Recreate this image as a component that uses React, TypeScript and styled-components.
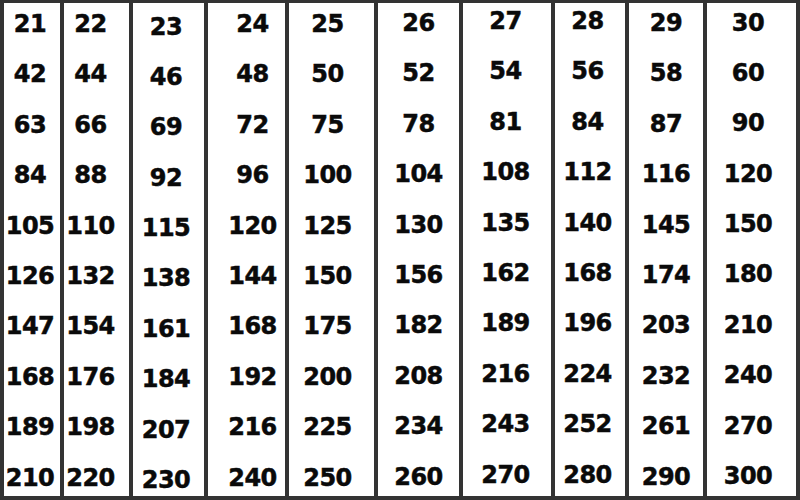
import React from 'react';
import styled, { createGlobalStyle } from 'styled-components';

interface ColumnSpec {
  base: number;
  width: number;
  top: number;
  shift: number;
}

// widths and text offsets read off the reference sheet
const columns: ColumnSpec[] = [
  { base: 21, width: 56, top: 24, shift: -2 },
  { base: 22, width: 65, top: 24, shift: -6 },
  { base: 23, width: 71, top: 26.5, shift: -2.5 },
  { base: 24, width: 77, top: 24, shift: 6 },
  { base: 25, width: 85, top: 24, shift: -4 },
  { base: 26, width: 81, top: 23, shift: 0 },
  { base: 27, width: 88, top: 21, shift: -1.5 },
  { base: 28, width: 70, top: 21, shift: -2.5 },
  { base: 29, width: 74, top: 23, shift: 0 },
  { base: 30, width: 89, top: 22.5, shift: -3.5 },
];

const multipliers = [1, 2, 3, 4, 5, 6, 7, 8, 9, 10];

const App = () => {
  return (
    <>
      <GlobalStyle />
      <Sheet>
        {columns.map((col, i) => (
          <Column
            key={col.base}
            $first={i === 0}
            $width={col.width}
            $top={col.top}
            $shift={col.shift}
          >
            {multipliers.map((m) => (
              <Cell key={m}>{col.base * m}</Cell>
            ))}
          </Column>
        ))}
      </Sheet>
    </>
  );
};

export default App;

const GlobalStyle = createGlobalStyle`
  html, body {
    margin: 0;
    padding: 0;
    background: #ffffff;
  }
`;

const Sheet = styled.div`
  display: flex;
  width: 800px;
  height: 500px;
  box-sizing: border-box;
  border: 4px solid #333333;
  border-top-width: 3px;
  background: #ffffff;
  overflow: hidden;
`;

const Column = styled.div<{ $first: boolean; $width: number; $top: number; $shift: number }>`
  flex: none;
  display: flex;
  flex-direction: column;
  box-sizing: border-box;
  width: ${(p) => p.$width + (p.$first ? 0 : 4)}px;
  border-left: ${(p) => (p.$first ? 'none' : '4px solid #333333')};
  padding-top: ${(p) => p.$top - 15}px;
  padding-left: ${(p) => Math.max(0, p.$shift * 2)}px;
  padding-right: ${(p) => Math.max(0, -p.$shift * 2)}px;
`;

const Cell = styled.div`
  flex: none;
  height: 50.4px;
  line-height: 24px;
  font-family: 'DejaVu Sans', 'Liberation Sans', sans-serif;
  font-weight: 700;
  font-size: 24px;
  color: #0a0a0a;
  text-align: center;
  white-space: nowrap;
  letter-spacing: -0.5px;
  -webkit-text-stroke: 0.5px #0a0a0a;
`;
